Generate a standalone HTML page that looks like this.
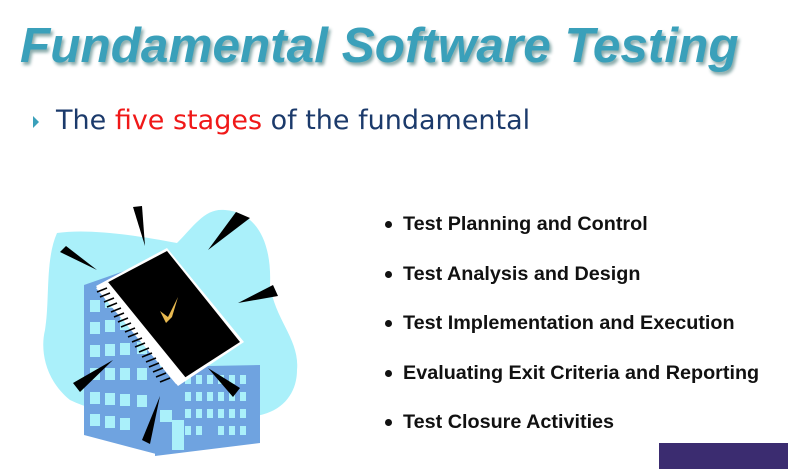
<!DOCTYPE html>
<html><head><meta charset="utf-8"><style>
body{margin:0;width:788px;height:469px;overflow:hidden;background:#fff;position:relative;font-family:"Liberation Sans","DejaVu Sans",sans-serif}
.t{position:absolute;left:20px;top:16px;font-size:49px;line-height:60px;white-space:nowrap;font-weight:bold;font-style:italic;color:#3aa0ba;text-shadow:2px 3px 3px #8aa;font-family:"Liberation Sans",sans-serif;transform:scaleX(1.01);transform-origin:left}
.s{position:absolute;left:56px;top:104px;font-size:27px;line-height:34px;white-space:nowrap;color:#1b3a6b;font-family:"DejaVu Sans",sans-serif}
.s b{font-weight:normal;color:#f01818}
.tri{position:absolute;left:33px;top:116px;width:0;height:0;border-left:6px solid #3aa0ba;border-top:6px solid transparent;border-bottom:6px solid transparent}
ul{position:absolute;left:383px;top:210px;margin:0;padding:0;list-style:none}
li{font-size:19.8px;font-weight:bold;color:#111;height:49.5px;line-height:28px;padding-left:20px;position:relative;white-space:nowrap;font-family:"Liberation Sans",sans-serif}
li:before{content:"";position:absolute;left:2px;top:11px;width:7px;height:7px;border-radius:50%;background:#111}
.p{position:absolute;left:659px;top:443px;width:129px;height:26px;background:#3b2c70}
</style></head><body>
<div class="t">Fundamental Software Testing</div>
<div class="tri"></div>
<div class="s">The <b>five stages</b> of the fundamental</div>
<ul>
<li>Test Planning and Control</li>
<li>Test Analysis and Design</li>
<li>Test Implementation and Execution</li>
<li>Evaluating Exit Criteria and Reporting</li>
<li>Test Closure Activities</li>
</ul>
<svg style="position:absolute;left:0;top:0" width="788" height="469">
<path d="M57 233 C90 228 140 236 177 243 C195 225 205 208 225 210 C255 212 272 240 270 285 C275 320 300 340 297 370 C297 395 280 418 240 417 C180 420 110 420 70 400 C45 380 40 350 45 330 C50 300 45 260 57 233Z" fill="#aaf0fa"/>
<polygon points="84,285 150,262 160,270 160,455 84,435" fill="#6fa3e0"/>
<polygon points="155,367 260,365 260,443 155,456" fill="#6fa3e0"/>
<g fill="#aaf0fa">
<rect x="90" y="300" width="10" height="12"/><rect x="105" y="296" width="10" height="12"/><rect x="120" y="292" width="10" height="12"/>
<rect x="90" y="322" width="10" height="12"/><rect x="105" y="320" width="10" height="12"/><rect x="120" y="318" width="10" height="12"/><rect x="137" y="316" width="10" height="12"/>
<rect x="90" y="345" width="10" height="12"/><rect x="105" y="344" width="10" height="12"/><rect x="120" y="343" width="10" height="12"/><rect x="137" y="342" width="10" height="12"/>
<rect x="90" y="368" width="10" height="12"/><rect x="105" y="368" width="10" height="12"/><rect x="120" y="368" width="10" height="12"/><rect x="137" y="368" width="10" height="12"/>
<rect x="90" y="392" width="10" height="12"/><rect x="105" y="393" width="10" height="12"/><rect x="120" y="394" width="10" height="12"/><rect x="137" y="395" width="10" height="12"/>
<rect x="90" y="414" width="10" height="12"/><rect x="105" y="416" width="10" height="12"/><rect x="120" y="418" width="10" height="12"/>
<rect x="185" y="375" width="6" height="9"/><rect x="196" y="375" width="6" height="9"/><rect x="207" y="375" width="6" height="9"/><rect x="218" y="375" width="6" height="9"/><rect x="229" y="375" width="6" height="9"/><rect x="240" y="375" width="6" height="9"/>
<rect x="185" y="392" width="6" height="9"/><rect x="196" y="392" width="6" height="9"/><rect x="207" y="392" width="6" height="9"/><rect x="218" y="392" width="6" height="9"/><rect x="229" y="392" width="6" height="9"/><rect x="240" y="392" width="6" height="9"/>
<rect x="185" y="409" width="6" height="9"/><rect x="196" y="409" width="6" height="9"/><rect x="207" y="409" width="6" height="9"/><rect x="218" y="409" width="6" height="9"/><rect x="229" y="409" width="6" height="9"/><rect x="240" y="409" width="6" height="9"/>
<rect x="185" y="426" width="6" height="9"/><rect x="196" y="426" width="6" height="9"/><rect x="218" y="426" width="6" height="9"/><rect x="229" y="426" width="6" height="9"/><rect x="240" y="426" width="6" height="9"/>
<rect x="160" y="410" width="12" height="12"/><rect x="172" y="420" width="12" height="30"/>
</g>
<polygon points="96,286 167,248 244,342 178,386" fill="#fff"/>
<polygon points="99,287 167,251 240,342 178,382" fill="#000"/>
<polygon points="96,288 108,282 186,378 176,384" fill="#fff"/>
<g stroke="#000" stroke-width="1.6" fill="none">
<path d="M97 292 l10 -4 M100 297 l10 -4 M104 302 l10 -4 M107 307 l10 -4 M111 312 l10 -4 M114 317 l10 -4 M118 322 l10 -4 M121 327 l10 -4 M125 332 l10 -4 M128 337 l10 -4 M132 342 l10 -4 M135 347 l10 -4 M139 352 l10 -4 M142 357 l10 -4 M146 362 l10 -4 M149 367 l10 -4 M153 372 l10 -4 M156 377 l10 -4 M160 382 l10 -4"/>
</g>
<path d="M160 311 l8 6 l10 -20 l-6 20 l-6 6z" fill="#e8b950"/>
<g fill="#000">
<polygon points="133,207 142,206 145,246"/>
<polygon points="60,252 66,246 97,270"/>
<polygon points="236,212 250,218 208,250"/>
<polygon points="273,285 278,296 238,303"/>
<polygon points="73,383 80,392 113,360"/>
<polygon points="240,388 233,397 208,368"/>
<polygon points="142,440 150,444 160,396"/>
</g>
</svg>
<div class="p"></div>
</body></html>
